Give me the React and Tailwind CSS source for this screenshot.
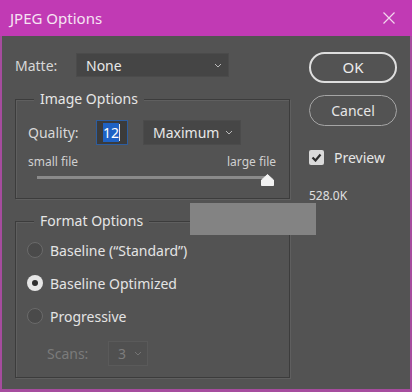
import React from "react"

const Chevron = ({ color = "#b9b9b9" }) => (
  <svg width="8" height="5" viewBox="0 0 8 5" fill="none">
    <path d="M1 1l3 3 3-3" stroke={color} strokeWidth="1" />
  </svg>
)

const Radio = ({ checked, label }) => (
  <div className="flex h-[20px] items-center">
    {checked ? (
      <div className="flex h-[16px] w-[16px] items-center justify-center rounded-full bg-[#e6e6e6]">
        <div className="h-[6px] w-[6px] rounded-full bg-[#2e2e2e]" />
      </div>
    ) : (
      <div className="h-[16px] w-[16px] rounded-full border border-[#6a6a6a] bg-[#4a4a4a]" />
    )}
    <span className="ml-[7px] text-[14px] text-[#e4e4e4]">{label}</span>
  </div>
)

const GroupBox = ({ title, className, children }) => (
  <div className={"relative border border-[#3c3c3c] shadow-[inset_1px_1px_0_#5f5f5f,1px_1px_0_#5f5f5f] " + className}>
    <span className="absolute -top-[12px] left-[18px] bg-[#535353] px-[6px] text-[14px] leading-[22px] text-[#e6e6e6]">
      {title}
    </span>
    {children}
  </div>
)

export default function App() {
  return (
    <div
      className="flex h-[392px] w-[412px] flex-col bg-[#a64c9e]"
      style={{ fontFamily: '"Noto Sans", "Open Sans", sans-serif' }}
    >
      {/* title bar */}
      <div className="flex h-[36px] items-center justify-between bg-[#c13ab4] pl-[10px] pr-[17px]">
        <span className="text-[15px] text-[#f6e4f3]">JPEG Options</span>
        <svg width="12" height="12" viewBox="0 0 12 12">
          <path d="M0.5 0.5l11 11M11.5 0.5l-11 11" stroke="#f3d6ee" strokeWidth="1.2" />
        </svg>
      </div>

      <div className="relative mx-[2px] mb-[3px] flex flex-1 bg-[#535353]">
        {/* left column */}
        <div className="w-[288px] pl-[13px] pt-[17px]">
          <div className="flex h-[24px] items-center">
            <span className="w-[61px] text-[14px] text-[#d8d8d8]">Matte:</span>
            <div className="flex h-[24px] w-[153px] items-center justify-between border border-[#4b4b4b] bg-[#454545] pl-[9px] pr-[6px]">
              <span className="text-[14px] text-[#e8e8e8]">None</span>
              <Chevron />
            </div>
          </div>

          <GroupBox title="Image Options" className="mt-[22px] h-[100px]">
            <div className="flex items-center pl-[12px] pt-[20px]">
              <span className="w-[68px] text-[14px] text-[#d8d8d8]">Quality:</span>
              <div className="flex h-[25px] w-[32px] items-center border border-[#2d5d9f] bg-[#3b3b3b] pl-[6px]">
                <span className="bg-[#1f62c4] text-[14px] leading-[19px] text-white">12</span>
                <span className="h-[17px] w-px bg-[#e8e8e8]" />
              </div>
              <div className="ml-[15px] flex h-[25px] w-[98px] items-center justify-between border border-[#4b4b4b] bg-[#464646] pl-[9px] pr-[7px]">
                <span className="text-[14px] text-[#e8e8e8]">Maximum</span>
                <Chevron />
              </div>
            </div>
            <div className="mt-[9px] flex justify-between pl-[12px] pr-[13px] text-[12px] leading-[16px] text-[#d0d0d0]">
              <span>small file</span>
              <span>large file</span>
            </div>
            <div className="relative ml-[21px] mt-[6px] h-[12px] w-[231px]">
              <div className="h-[3px] w-full bg-[#8a8a8a]" />
              <svg className="absolute -top-[2px] left-[224px]" width="13" height="12" viewBox="0 0 13 12">
                <path d="M6.5 0.5 L12.5 6 L12.5 11.5 L0.5 11.5 L0.5 6 Z" fill="#f2f2f2" stroke="#f2f2f2" strokeLinejoin="round" />
              </svg>
            </div>
          </GroupBox>

          <GroupBox title="Format Options" className="mt-[22px] h-[157px]">
            <div className="flex flex-col gap-[13px] pl-[11px] pt-[18px]">
              <Radio label="Baseline (“Standard”)" />
              <Radio checked label="Baseline Optimized" />
              <Radio label="Progressive" />
            </div>
            <div className="mt-[15px] flex items-center pl-[31px]">
              <span className="w-[61px] text-[14px] text-[#7b7b7b]">Scans:</span>
              <div className="flex h-[25px] w-[40px] items-center justify-between border border-[#5a5a5a] bg-[#505050] pl-[9px] pr-[5px]">
                <span className="text-[14px] text-[#7d7d7d]">3</span>
                <Chevron color="#747474" />
              </div>
            </div>
          </GroupBox>
        </div>

        {/* right column */}
        <div className="flex flex-col pl-[19px] pt-[16px]">
          <button className="h-[31px] w-[88px] rounded-full border-2 border-[#dedede] text-[15px] text-[#ececec]">
            OK
          </button>
          <button className="mt-[12px] h-[31px] w-[88px] rounded-full border border-[#a5a5a5] text-[14px] text-[#e6e6e6]">
            Cancel
          </button>
          <div className="mt-[23px] flex h-[16px] items-center">
            <div className="flex h-[15px] w-[15px] items-center justify-center rounded-[2px] bg-[#dadada]">
              <svg width="11" height="9" viewBox="0 0 11 9" fill="none">
                <path d="M1.5 4.5l3 3 5-6" stroke="#2c2c2c" strokeWidth="2.2" />
              </svg>
            </div>
            <span className="ml-[10px] text-[14px] text-[#e6e6e6]">Preview</span>
          </div>
          <span className="mt-[23px] text-[12px] leading-[16px] text-[#e0e0e0]">528.0K</span>
        </div>

        {/* redacted block */}
        <div className="absolute left-[188px] top-[167px] h-[32px] w-[126px] bg-[#838383]" />
      </div>
    </div>
  )
}
